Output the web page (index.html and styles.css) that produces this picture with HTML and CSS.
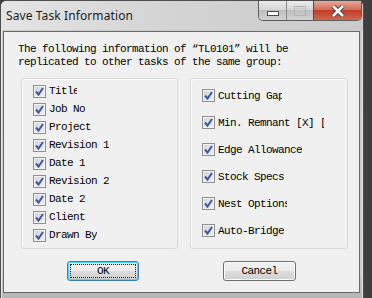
FILE: index.html
```html
<!DOCTYPE html>
<html lang="en">
  <head>
    <meta charset="UTF-8" />
    <title>Save Task Information</title>
    <link rel="stylesheet" href="styles.css">
  </head>
  <body>
    <div class="window">
      <div class="titlebar">
        <span class="title">Save Task Information</span>
        <div class="caption-btns">
          <span class="cap min">
            <svg width="12" height="5" viewBox="0 0 12 5"><rect x="0.5" y="0.5" width="11" height="4" fill="#fff" stroke="#4a4a4a" /></svg>
          </span>
          <span class="cap max">
            <svg width="12" height="10" viewBox="0 0 12 10"><rect x="0.5" y="0.5" width="11" height="9" fill="none" stroke="#b4b4b4" /><rect x="2.5" y="2.5" width="7" height="5" fill="none" stroke="#c8c8c8" /></svg>
          </span>
          <span class="cap close">
            <svg width="16" height="12" viewBox="0 0 16 12">
              <path d="M3 1 L13 11 M13 1 L3 11" stroke="#3a3a3a" stroke-width="4.4" />
              <path d="M3 1 L13 11 M13 1 L3 11" stroke="#fff" stroke-width="2.6" />
            </svg>
          </span>
        </div>
      </div>

      <div class="client">
        <p class="intro">The following information of “TL0101” will be<br>replicated to other tasks of the same group:</p>

        <div class="groups">
          <div class="group left">
            <div class="item"><span class="check"><svg width="11" height="11" viewBox="0 0 11 11"><path d="M2 5.5 L4.5 8.5 L9 2" fill="none" stroke="#3f56a0" stroke-width="2" /></svg></span><span class="label clip-title">Title</span></div>
            <div class="item"><span class="check"><svg width="11" height="11" viewBox="0 0 11 11"><path d="M2 5.5 L4.5 8.5 L9 2" fill="none" stroke="#3f56a0" stroke-width="2" /></svg></span><span class="label">Job No</span></div>
            <div class="item"><span class="check"><svg width="11" height="11" viewBox="0 0 11 11"><path d="M2 5.5 L4.5 8.5 L9 2" fill="none" stroke="#3f56a0" stroke-width="2" /></svg></span><span class="label">Project</span></div>
            <div class="item"><span class="check"><svg width="11" height="11" viewBox="0 0 11 11"><path d="M2 5.5 L4.5 8.5 L9 2" fill="none" stroke="#3f56a0" stroke-width="2" /></svg></span><span class="label">Revision 1</span></div>
            <div class="item"><span class="check"><svg width="11" height="11" viewBox="0 0 11 11"><path d="M2 5.5 L4.5 8.5 L9 2" fill="none" stroke="#3f56a0" stroke-width="2" /></svg></span><span class="label">Date 1</span></div>
            <div class="item"><span class="check"><svg width="11" height="11" viewBox="0 0 11 11"><path d="M2 5.5 L4.5 8.5 L9 2" fill="none" stroke="#3f56a0" stroke-width="2" /></svg></span><span class="label">Revision 2</span></div>
            <div class="item"><span class="check"><svg width="11" height="11" viewBox="0 0 11 11"><path d="M2 5.5 L4.5 8.5 L9 2" fill="none" stroke="#3f56a0" stroke-width="2" /></svg></span><span class="label">Date 2</span></div>
            <div class="item"><span class="check"><svg width="11" height="11" viewBox="0 0 11 11"><path d="M2 5.5 L4.5 8.5 L9 2" fill="none" stroke="#3f56a0" stroke-width="2" /></svg></span><span class="label">Client</span></div>
            <div class="item"><span class="check"><svg width="11" height="11" viewBox="0 0 11 11"><path d="M2 5.5 L4.5 8.5 L9 2" fill="none" stroke="#3f56a0" stroke-width="2" /></svg></span><span class="label">Drawn By</span></div>
          </div>

          <div class="group right">
            <div class="item"><span class="check"><svg width="11" height="11" viewBox="0 0 11 11"><path d="M2 5.5 L4.5 8.5 L9 2" fill="none" stroke="#3f56a0" stroke-width="2" /></svg></span><span class="label clip-gap">Cutting Gap</span></div>
            <div class="item"><span class="check"><svg width="11" height="11" viewBox="0 0 11 11"><path d="M2 5.5 L4.5 8.5 L9 2" fill="none" stroke="#3f56a0" stroke-width="2" /></svg></span><span class="label clip-remnant">Min. Remnant [X] [Y]</span></div>
            <div class="item"><span class="check"><svg width="11" height="11" viewBox="0 0 11 11"><path d="M2 5.5 L4.5 8.5 L9 2" fill="none" stroke="#3f56a0" stroke-width="2" /></svg></span><span class="label">Edge Allowance</span></div>
            <div class="item"><span class="check"><svg width="11" height="11" viewBox="0 0 11 11"><path d="M2 5.5 L4.5 8.5 L9 2" fill="none" stroke="#3f56a0" stroke-width="2" /></svg></span><span class="label">Stock Specs</span></div>
            <div class="item"><span class="check"><svg width="11" height="11" viewBox="0 0 11 11"><path d="M2 5.5 L4.5 8.5 L9 2" fill="none" stroke="#3f56a0" stroke-width="2" /></svg></span><span class="label clip-nest">Nest Options</span></div>
            <div class="item"><span class="check"><svg width="11" height="11" viewBox="0 0 11 11"><path d="M2 5.5 L4.5 8.5 L9 2" fill="none" stroke="#3f56a0" stroke-width="2" /></svg></span><span class="label">Auto-Bridge</span></div>
          </div>
        </div>

        <div class="buttons">
          <button class="btn default"><span class="focus">OK</span></button>
          <button class="btn">Cancel</button>
        </div>
      </div>
    </div>
  </body>
</html>
```

FILE: styles.css
```css
body {
  margin: 0;
  padding: 0;
  width: 372px;
  height: 298px;
  overflow: hidden;
  background: linear-gradient(to right, #3c3c3c, #5a5a5a 40%, #3e3e3e);
}

.window {
  box-sizing: border-box;
  width: 364px;
  height: 300px;
  padding: 0 3px 0 2px;
  border: 1px solid #4e4e4e;
  border-bottom: none;
  border-radius: 6px 6px 0 0;
  background: linear-gradient(to bottom, #d6d6d6, #c9c9c9 12%, #cdcdcd 90%, #b4b4b4);
  box-shadow: inset 1px 1px 0 #eaeaea, inset -1px 0 0 #e0e0e0;
}

.titlebar {
  height: 29px;
  display: flex;
  align-items: flex-start;
  margin-right: -3px;
  background: linear-gradient(to right, #e4e4e4, #d4d4d4 45%, #cacaca);
  margin-left: -2px;
  border-radius: 6px 6px 0 0;
}

.title {
  font-family: "Noto Sans", sans-serif;
  font-size: 12px;
  color: #1e1e1e;
  margin: 6px 0 0 5px;
  letter-spacing: 0.1px;
}

.caption-btns {
  margin-left: auto;
  margin-right: 1px;
  display: flex;
  height: 19px;
  border: 1px solid #5c5c5c;
  border-top: none;
  border-radius: 0 0 5px 5px;
  overflow: hidden;
}

.cap {
  display: flex;
  align-items: center;
  justify-content: center;
  height: 19px;
}

.cap.min {
  width: 27px;
  background: linear-gradient(to bottom, #ececec, #d6d6d6 45%, #bebebe 50%, #d2d2d2);
  border-right: 1px solid #8a8a8a;
}

.cap.min svg {
  margin-top: 5px;
}

.cap.max {
  width: 26px;
  background: linear-gradient(to bottom, #ececec, #d6d6d6 45%, #bebebe 50%, #d2d2d2);
  border-right: 1px solid #7a3a30;
}

.cap.close {
  width: 47px;
  background: linear-gradient(to bottom, #e8a898, #d06f5a 45%, #c03e26 50%, #d2674f);
}

.client {
  box-sizing: border-box;
  height: 262px;
  margin-top: 1px;
  border: 1px solid #6a6a6a;
  background-color: #f0f0f0;
  font-family: "Liberation Mono", monospace;
  font-size: 11px;
  letter-spacing: -0.6px;
  color: #000;
}

.intro {
  margin: 0;
  padding: 11px 0 0 14px;
  line-height: 13px;
  white-space: nowrap;
}

.groups {
  display: flex;
  gap: 12px;
  margin: 9px 0 0 17px;
}

.group {
  box-sizing: border-box;
  height: 171px;
  border: 1px solid #d9d9d9;
  border-radius: 3px;
  box-shadow: inset 1px 1px 0 #fcfcfc;
  padding-left: 11px;
}

.group.left {
  width: 157px;
  padding-top: 3px;
}

.group.right {
  width: 158px;
  padding-top: 3px;
}

.item {
  display: flex;
  align-items: center;
  gap: 3px;
  height: 18px;
}

.group.right .item {
  height: 27px;
}

.check {
  box-sizing: border-box;
  width: 13px;
  height: 13px;
  border: 1px solid #8e8f8f;
  background: linear-gradient(135deg, #cfd3dc, #f2f3f6);
  box-shadow: inset 0 0 0 1px #f4f4f4;
  display: flex;
  align-items: center;
  justify-content: center;
}

.label {
  white-space: nowrap;
  overflow: hidden;
  line-height: 14px;
}

.clip-title {
  width: 28px;
}

.clip-gap {
  width: 64px;
}

.clip-remnant {
  width: 106px;
}

.clip-nest {
  width: 69px;
}

.buttons {
  display: flex;
  gap: 84px;
  margin: 12px 0 0 63px;
}

.btn {
  box-sizing: border-box;
  width: 72px;
  height: 20px;
  padding: 0;
  border: 1px solid #707070;
  border-radius: 3px;
  background: linear-gradient(to bottom, #f2f2f2, #ebebeb 48%, #dddddd 52%, #cfcfcf);
  box-shadow: inset 0 0 0 1px #fbfbfb;
  font-family: "Liberation Mono", monospace;
  font-size: 11px;
  letter-spacing: -0.6px;
  color: #000;
  display: flex;
  align-items: center;
  justify-content: center;
}

.btn + .btn {
  width: 73px;
}

.btn.default {
  border-color: #3c7fb1;
  box-shadow: inset 0 0 0 1px #48d8fb;
  background: linear-gradient(to bottom, #eaf6fd, #d9f0fc 48%, #bee6fd 52%, #a7d9f5);
  background: linear-gradient(to bottom, #f2f2f2, #ebebeb 48%, #dddddd 52%, #cfcfcf);
}

.focus {
  box-sizing: border-box;
  width: 66px;
  height: 14px;
  border: 1px dotted #202020;
  display: flex;
  align-items: center;
  justify-content: center;
}
```
